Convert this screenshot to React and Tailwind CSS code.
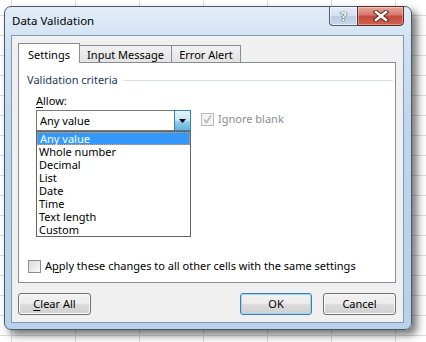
import React from 'react'

const items = ['Any value', 'Whole number', 'Decimal', 'List', 'Date', 'Time', 'Text length', 'Custom']

function Checkbox({ checked, disabled }) {
  return (
    <span
      className={`w-[13px] h-[13px] border flex items-center justify-center shrink-0 ${
        disabled
          ? 'border-[#bcbcbc] bg-[#f4f4f4]'
          : 'border-[#8e8f8f] bg-[linear-gradient(135deg,#d8d8d8,#fafafa)]'
      }`}
    >
      {checked && (
        <svg width="11" height="11" viewBox="0 0 11 11">
          <path d="M2 5.5 L4.5 8.5 L9 1.5" fill="none" stroke="#b8b8b8" strokeWidth="1.5" />
        </svg>
      )}
    </span>
  )
}

function Button({ children, focused, className = '' }) {
  return (
    <div
      className={`h-[22px] rounded-[3px] border flex items-center justify-center text-black ${
        focused
          ? 'border-[#3c7fb1] shadow-[inset_0_0_0_1px_#9fd6f5] bg-[linear-gradient(#f2f2f2_0%,#ebebeb_50%,#dddddd_50%,#cfcfcf_100%)]'
          : 'border-[#707070] shadow-[inset_0_0_0_1px_#fbfbfb] bg-[linear-gradient(#f2f2f2_0%,#ebebeb_50%,#dddddd_50%,#cfcfcf_100%)]'
      } ${className}`}
    >
      {children}
    </div>
  )
}

export default function App() {
  return (
    <div className="w-[426px] h-[342px] overflow-hidden bg-white bg-[linear-gradient(#dadcdd_1px,transparent_1px),linear-gradient(90deg,#dadcdd_1px,transparent_1px)] bg-[length:64px_20px] bg-[position:11px_15px] pt-[6px] pl-[4px] font-['Segoe_UI','Noto_Sans',sans-serif] text-[11px] leading-[16px] text-black">
      {/* window */}
      <div className="w-[408px] h-[324px] rounded-[7px] border border-[#4a5a6b] bg-[linear-gradient(#e3edf8_0%,#cfe0f2_12%,#bed5ee_40%,#b9d1ec_100%)] shadow-[5px_5px_8px_rgba(0,0,0,0.55)]">
        {/* title bar */}
        <div className="h-[28px] flex justify-between">
          <span className="pl-[7px] self-center text-[11.5px] text-black">Data Validation</span>
          <div className="flex mt-[-1px] mr-[7px] h-[20px]">
            <div className="w-[28px] h-[20px] rounded-bl-[4px] border border-[#4e5e70] border-r-0 bg-[linear-gradient(#e6eef7_0%,#d2dfee_50%,#bccde2_50%,#c7d6e8_100%)] shadow-[inset_0_0_0_1px_rgba(255,255,255,0.6)] flex items-center justify-center">
              <span className="text-[13px] font-bold leading-none text-white [text-shadow:0_0_1px_#33475e,0_0_1px_#33475e,0_0_1px_#33475e]">?</span>
            </div>
            <div className="w-[47px] h-[20px] rounded-br-[4px] border border-[#5a2a25] bg-[linear-gradient(#e9a99c_0%,#d4776a_45%,#c4493a_50%,#d0624f_100%)] shadow-[inset_0_0_0_1px_rgba(255,255,255,0.35)] flex items-center justify-center">
              <svg width="16" height="12" viewBox="0 0 16 12">
                <path d="M3 2 L13 10 M13 2 L3 10" stroke="#5b2620" strokeWidth="4.5" strokeLinecap="square" />
                <path d="M3 2 L13 10 M13 2 L3 10" stroke="#ffffff" strokeWidth="2.5" strokeLinecap="square" />
              </svg>
            </div>
          </div>
        </div>

        {/* client area */}
        <div className="ml-[6px] w-[393px] h-[288px] border border-[#8399b1] bg-[#f0f0f0] pl-[6px] pt-[7px]">
          {/* tabs */}
          <div className="flex items-end h-[19px]">
            <div className="relative z-10 w-[62px] h-[20px] -mb-px border border-b-0 border-[#898c95] bg-white flex justify-center pt-[3px]">
              Settings
            </div>
            <div className="w-[92px] h-[17px] border border-b-0 border-l-0 border-[#898c95] bg-[linear-gradient(#f2f2f2,#e3e3e3)] flex justify-center pt-[1px]">
              Input Message
            </div>
            <div className="w-[69px] h-[17px] border border-b-0 border-l-0 border-[#898c95] bg-[linear-gradient(#f2f2f2,#e3e3e3)] flex justify-center pt-[1px]">
              Error Alert
            </div>
          </div>

          {/* tab page */}
          <div className="w-[378px] h-[221px] border border-[#898c95] bg-white flex flex-col">
            <div className="mt-[9px] pl-[8px] pr-[2px] flex items-center gap-[6px]">
              <span className="text-[#1e395b]">Validation criteria</span>
              <div className="flex-1 h-px bg-[#d5dfe5]" />
            </div>

            <div className="mt-[5px] pl-[17px]">
              <span className="underline underline-offset-2">A</span>llow:
            </div>

            <div className="mt-[1px] pl-[17px] flex items-start">
              <div className="relative w-[155px] h-[21px] border border-[#7a7a7a] bg-white flex items-center pl-[3px]">
                <span>Any value</span>
                <div className="absolute right-[-1px] top-[-1px] w-[17px] h-[21px] border border-[#3c7fb1] bg-[linear-gradient(#e5f4fc_0%,#c4e5f6_50%,#98d1ef_50%,#68b3db_100%)] flex items-center justify-center">
                  <svg width="8" height="4" viewBox="0 0 8 4">
                    <path d="M0 0 H7 L3.5 4 Z" fill="#000" />
                  </svg>
                </div>
                {/* open list */}
                <div className="absolute left-[-1px] top-[20px] w-[155px] h-[106px] border border-[#646464] bg-white z-20">
                  {items.map((item, i) => (
                    <div
                      key={item}
                      className={`h-[13px] leading-[13px] pl-[2px] ${
                        i === 0 ? 'bg-[#3399ff] text-white border border-dotted border-[#f5a040]' : ''
                      }`}
                    >
                      <span className={i === 0 ? 'relative top-[-1px]' : ''}>{item}</span>
                    </div>
                  ))}
                </div>
              </div>
              <div className="ml-[10px] mt-[1px] flex items-center gap-[4px] text-[#8d8d8d]">
                <Checkbox checked disabled />
                <span>Ignore blank</span>
              </div>
            </div>

            <div className="mt-auto mb-[8px] pl-[9px] flex items-center gap-[4px]">
              <Checkbox />
              <span>
                A<span className="underline underline-offset-2">p</span>ply these changes to all other cells with the same settings
              </span>
            </div>
          </div>

          {/* buttons */}
          <div className="mt-[10px] w-[378px] flex">
            <Button className="w-[73px]">
              <span>
                <span className="underline underline-offset-2">C</span>lear All
              </span>
            </Button>
            <Button focused className="w-[72px] ml-auto">OK</Button>
            <Button className="w-[73px] ml-[11px]">Cancel</Button>
          </div>
        </div>
      </div>
    </div>
  )
}
